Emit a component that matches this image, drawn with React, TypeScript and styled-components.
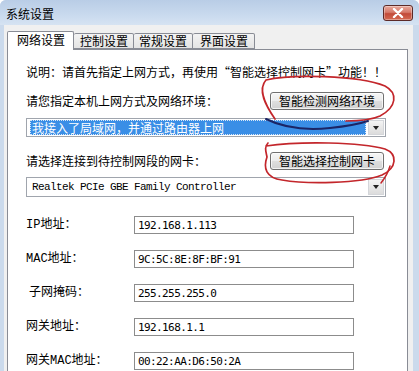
import styled, { createGlobalStyle } from 'styled-components';

const GlobalStyle = createGlobalStyle`
  html, body {
    margin: 0;
    padding: 0;
    background: #ffffff;
  }
  body {
    font-family: "Noto Sans CJK SC", "Liberation Sans", sans-serif;
    font-size: 12px;
    color: #000;
  }
`;

const TABS = ['网络设置', '控制设置', '常规设置', '界面设置'];

const FIELDS = [
  { label: 'IP地址：', value: '192.168.1.113', indent: 0 },
  { label: 'MAC地址：', value: '9C:5C:8E:8F:BF:91', indent: 0 },
  { label: '子网掩码：', value: '255.255.255.0', indent: 3 },
  { label: '网关地址：', value: '192.168.1.1', indent: 0 },
  { label: '网关MAC地址：', value: '00:22:AA:D6:50:2A', indent: 0 },
];

const App = () => {
  return (
    <>
      <GlobalStyle />
      <S.Window>
        <S.TitleBar>
          <S.Title>系统设置</S.Title>
          <S.CloseButton>
            <svg width="12" height="10" viewBox="0 0 12 10">
              <path d="M2 1 L10 9 M10 1 L2 9" stroke="#fff" strokeWidth="2.4" strokeLinecap="round" />
            </svg>
          </S.CloseButton>
        </S.TitleBar>

        <S.Client>
          <S.TabList>
            {TABS.map((tab, i) => (
              <S.Tab key={tab} $active={i === 0}>
                {tab}
              </S.Tab>
            ))}
          </S.TabList>

          <S.Panel>
            <S.Note>说明：请首先指定上网方式，再使用“智能选择控制网卡”功能！！</S.Note>

            <S.ActionRow $top={12}>
              <S.Prompt>请您指定本机上网方式及网络环境：</S.Prompt>
              <S.Button>智能检测网络环境</S.Button>
            </S.ActionRow>

            <S.Select $top={8}>
              <S.SelectValue $selected>我接入了局域网，并通过路由器上网</S.SelectValue>
              <S.DropArrow />
            </S.Select>

            <S.ActionRow $top={15}>
              <S.Prompt>请选择连接到待控制网段的网卡：</S.Prompt>
              <S.Button>智能选择控制网卡</S.Button>
            </S.ActionRow>

            <S.Select $top={7} $tall>
              <S.SelectValue $mono>Realtek PCIe GBE Family Controller</S.SelectValue>
              <S.DropArrow />
            </S.Select>

            <S.FieldList>
              {FIELDS.map((f) => (
                <S.FieldRow key={f.label}>
                  <S.FieldLabel $indent={f.indent}>{f.label}</S.FieldLabel>
                  <S.FieldInput>{f.value}</S.FieldInput>
                </S.FieldRow>
              ))}
            </S.FieldList>
          </S.Panel>
        </S.Client>

        {/* hand-drawn marks over the dialog */}
        <S.Marks viewBox="0 0 419 371" width="419" height="371">
          <path
            d="M275 119 C266 106, 257 90, 266 80 C290 74, 358 75, 385 86 C398 93, 397 107, 380 116 C369 121, 356 121, 346 121"
            fill="none"
            stroke="#c3262b"
            strokeWidth="1.7"
            strokeLinecap="round"
          />
          <path
            d="M266 119 C280 126, 300 131, 330 128 C350 126, 362 123, 368 121"
            fill="none"
            stroke="#1b2566"
            strokeWidth="2"
            strokeLinecap="round"
          />
          <path
            d="M268 143 C264 147, 266 152, 267 157 C263 168, 266 178, 282 180 C305 184, 360 184, 382 175 C397 168, 398 154, 385 149 C360 142, 300 141, 266 146"
            fill="none"
            stroke="#c3262b"
            strokeWidth="1.7"
            strokeLinecap="round"
          />
          <path
            d="M390 166 C388 173, 385 178, 381 183"
            fill="none"
            stroke="#c3262b"
            strokeWidth="1.5"
            strokeLinecap="round"
          />
        </S.Marks>
      </S.Window>
    </>
  );
};

export default App;

const S = {
  Window: styled.div`
    position: relative;
    width: 419px;
    height: 371px;
    overflow: hidden;
    display: flex;
    flex-direction: column;
    background: #cbdaec;
    border-radius: 6px 6px 0 0;
  `,

  TitleBar: styled.div`
    height: 25px;
    flex-shrink: 0;
    display: flex;
    align-items: flex-start;
    justify-content: space-between;
    padding: 0 6px 0 6px;
    background: linear-gradient(#b9cde6 0%, #c9daee 60%, #d6e3f2 100%);
    box-sizing: border-box;
  `,

  Title: styled.span`
    margin-top: 6px;
    font-size: 12px;
    line-height: 16px;
    color: #000;
  `,

  CloseButton: styled.div`
    margin-top: 5px;
    width: 30px;
    height: 16px;
    box-sizing: border-box;
    display: flex;
    align-items: center;
    justify-content: center;
    border: 1px solid #5c2a27;
    border-radius: 3px;
    background: linear-gradient(#e9a99c 0%, #d67a6a 45%, #c24a38 55%, #d46a52 100%);
    box-shadow: inset 0 0 0 1px rgba(255, 255, 255, 0.35);
  `,

  Client: styled.div`
    flex: 1;
    margin: 0 6px 0 4px;
    padding: 6px 5px 0 3px;
    background: #f0f0f0;
    display: flex;
    flex-direction: column;
    min-height: 0;
  `,

  TabList: styled.div`
    display: flex;
    align-items: flex-end;
    position: relative;
    z-index: 1;
  `,

  Tab: styled.div<{ $active?: boolean }>`
    box-sizing: border-box;
    height: ${(p) => (p.$active ? '19px' : '16px')};
    margin-bottom: ${(p) => (p.$active ? '-1px' : '0')};
    padding: ${(p) => (p.$active ? '1px 8px 0 9px' : '0 5px')};
    border: 1px solid #898c95;
    border-bottom: ${(p) => (p.$active ? 'none' : '1px solid #898c95')};
    border-left: ${(p) => (p.$active ? '1px solid #898c95' : 'none')};
    border-radius: 2px 2px 0 0;
    background: ${(p) => (p.$active ? '#ffffff' : 'linear-gradient(#f3f3f3, #e4e4e4)')};
    font-size: 12px;
    line-height: 14px;
    white-space: nowrap;
    &:nth-child(2) {
      padding: 0 5px 0 6px;
    }
    &:last-child {
      padding: 0 6px 0 7px;
    }
  `,

  Panel: styled.div`
    position: relative;
    flex: 1;
    width: 401px;
    box-sizing: border-box;
    border: 1px solid #898c95;
    border-bottom: none;
    background: #ffffff;
    padding: 14px 21px 0 18px;
  `,

  Note: styled.div`
    line-height: 16px;
    white-space: nowrap;
    font-feature-settings: "fwid";
  `,

  ActionRow: styled.div<{ $top: number }>`
    margin-top: ${(p) => p.$top}px;
    display: flex;
    align-items: center;
    justify-content: space-between;
    height: 18px;
    padding-right: 2px;
  `,

  Prompt: styled.span`
    line-height: 16px;
    white-space: nowrap;
  `,

  Button: styled.div`
    width: 114px;
    height: 18px;
    box-sizing: border-box;
    border: 1px solid #707070;
    border-radius: 3px;
    background: linear-gradient(#f6f6f6 0%, #ececec 48%, #dedede 52%, #d2d2d2 100%);
    box-shadow: inset 0 0 0 1px rgba(255, 255, 255, 0.7);
    display: flex;
    align-items: center;
    justify-content: center;
    font-size: 12px;
    line-height: 14px;
    white-space: nowrap;
  `,

  Select: styled.div<{ $top: number; $tall?: boolean }>`
    margin-top: ${(p) => p.$top}px;
    height: ${(p) => (p.$tall ? '20px' : '19px')};
    box-sizing: border-box;
    border: 1px solid #a0a5ad;
    background: #fff;
    display: flex;
    align-items: stretch;
    padding: 1px;
    gap: 2px;
  `,

  SelectValue: styled.div<{ $selected?: boolean; $mono?: boolean }>`
    flex: 1;
    display: flex;
    align-items: center;
    box-sizing: border-box;
    padding-left: ${(p) => (p.$mono ? '4px' : '2px')};
    margin-left: ${(p) => (p.$selected ? '2px' : '0')};
    background: ${(p) => (p.$selected ? '#3a8ee6' : 'transparent')};
    outline: ${(p) => (p.$selected ? '1px dotted #d8e6f5' : 'none')};
    outline-offset: -1px;
    color: ${(p) => (p.$selected ? '#ffffff' : '#000')};
    font-family: ${(p) =>
      p.$mono ? '"Liberation Mono", monospace' : '"Noto Sans CJK SC", sans-serif'};
    font-size: ${(p) => (p.$mono ? '11px' : '12px')};
    letter-spacing: ${(p) => (p.$mono ? '-0.6px' : '0')};
    line-height: 14px;
    white-space: nowrap;
  `,

  DropArrow: styled.div`
    width: 16px;
    box-sizing: border-box;
    border: 1px solid #d4d6da;
    background: linear-gradient(#f4f4f4, #dcdcdc);
    display: flex;
    align-items: center;
    justify-content: center;
    &::after {
      content: '';
      border-left: 3.5px solid transparent;
      border-right: 3.5px solid transparent;
      border-top: 4px solid #222;
    }
  `,

  FieldList: styled.div`
    margin-top: 19px;
    display: flex;
    flex-direction: column;
    gap: 16px;
  `,

  FieldRow: styled.div`
    display: flex;
    align-items: center;
    height: 18px;
  `,

  FieldLabel: styled.span<{ $indent: number }>`
    width: 108px;
    box-sizing: border-box;
    padding-left: ${(p) => p.$indent}px;
    font-family: "Liberation Mono", "Noto Sans CJK SC", monospace;
    font-size: 12px;
    line-height: 16px;
    white-space: nowrap;
  `,

  FieldInput: styled.div`
    width: 220px;
    height: 18px;
    box-sizing: border-box;
    border: 1px solid #8c8c8c;
    padding-left: 3px;
    display: flex;
    align-items: center;
    font-family: "DejaVu Sans Mono", monospace;
    font-size: 11px;
    letter-spacing: -0.6px;
    white-space: nowrap;
  `,

  Marks: styled.svg`
    position: absolute;
    left: 0;
    top: 0;
    pointer-events: none;
  `,
};
